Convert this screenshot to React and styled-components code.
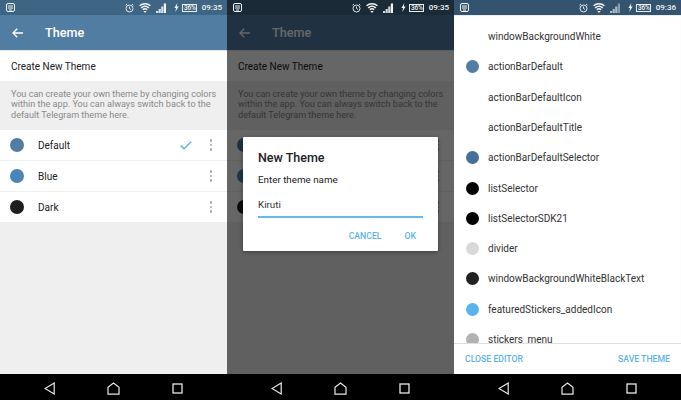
import React from "react";
import styled, { createGlobalStyle } from "styled-components";

const Global = createGlobalStyle`
  html, body { margin: 0; padding: 0; background: #000; }
  body { font-family: Roboto, "Liberation Sans", sans-serif; }
  #root { width: 681px; height: 400px; overflow: hidden; }
`;

const Page = styled.div`
  display: grid;
  grid-template-columns: 227px 227px 227px;
  width: 681px;
  height: 400px;
`;
const Screen = styled.div`
  display: flex;
  flex-direction: column;
  height: 400px;
  background: #efefef;
  overflow: hidden;
`;
const Status = styled.div`
  flex: 0 0 15px;
  height: 15px;
  display: flex;
  align-items: center;
  padding: 0 5px 0 6px;
  background: ${p => p.$bg};
  color: #f2f5f7;
`;
const Time = styled.span`
  font-size: 8px;
  font-weight: 500;
  margin-left: 4.5px;
  line-height: 15px;
  white-space: nowrap;
`;
const BatteryBox = styled.span`
  width: 15px;
  height: 8px;
  border: 1px solid #e8edf1;
  box-sizing: border-box;
  font-size: 6.5px;
  font-weight: 500;
  line-height: 6.5px;
  text-align: center;
  margin-left: 3px;
  letter-spacing: -0.2px;
  white-space: nowrap;
`;
const StatusIcon = styled.svg`
  display: block;
  flex: none;
  margin-left: ${p => p.$ml || 0};
`;
const Body = styled.div`
  position: relative;
  flex: 1;
  min-height: 0;
  display: flex;
  flex-direction: column;
`;
const ActionBar = styled.div`
  flex: 0 0 35px;
  display: flex;
  align-items: center;
  background: #527da3;
  padding-left: 12px;
  color: #fff;
`;
const Title = styled.div`
  font-size: 12.6px;
  font-weight: 500;
  margin-left: 22px;
`;
const CreateRow = styled.div`
  flex: 0 0 31px;
  background: #fff;
  display: flex;
  align-items: center;
  padding-left: 11px;
  font-size: 10px;
  color: #222;
  border-top: 1px solid #e2e6ea;
  box-sizing: border-box;
`;
const Hint = styled.div`
  flex: 0 0 49px;
  box-sizing: border-box;
  padding: 8px 8px 0 11px;
  font-size: 9.1px;
  line-height: 10.4px;
  color: #8a8a8a;
  white-space: nowrap;
`;
const ThemeList = styled.div`
  background: #fff;
  display: flex;
  flex-direction: column;
`;
const ThemeRow = styled.div`
  height: 30px;
  display: flex;
  align-items: center;
  padding-left: 10px;
  & + & { border-top: 1px solid #f0f0f0; }
`;
const Swatch = styled.span`
  flex: none;
  width: 14px;
  height: 14px;
  border-radius: 50%;
  background: ${p => p.$c};
`;
const ThemeName = styled.span`
  margin-left: 14px;
  font-size: 10px;
  color: #222;
  flex: 1;
`;
const Check = styled.svg`
  display: block;
  margin-right: 18px;
`;
const Kebab = styled.span`
  display: flex;
  flex-direction: column;
  gap: 2px;
  margin-right: 15px;
  & > i { display: block; width: 2.4px; height: 2.4px; border-radius: 50%; background: #a8a8a8; }
`;
const Nav = styled.div`
  flex: 0 0 26px;
  box-sizing: border-box;
  background: #000;
  display: grid;
  grid-template-columns: 1fr 1fr 1fr;
  padding: 3px 18px 0;
  align-items: center;
  justify-items: center;
`;
const Scrim = styled.div`
  position: absolute;
  inset: 0;
  background: rgba(0, 0, 0, 0.6);
`;
const Dialog = styled.div`
  position: absolute;
  left: 16px;
  top: 122px;
  width: 195px;
  height: 114px;
  box-sizing: border-box;
  padding: 13px 15px 0;
  background: #fff;
  box-shadow: 0 1px 4px rgba(0,0,0,.35);
  border-radius: 1px;
  display: flex;
  flex-direction: column;
`;
const DialogTitle = styled.div`
  font-size: 12.5px;
  font-weight: 500;
  line-height: 15px;
  color: #222;
`;
const DialogText = styled.div`
  font-size: 9.8px;
  line-height: 13px;
  margin-top: 8px;
  color: #222;
`;
const Field = styled.div`
  margin-top: 12px;
  height: 18px;
  font-size: 9.8px;
  line-height: 13px;
  color: #333;
  border-bottom: 2px solid #66b8ee;
`;
const DialogActions = styled.div`
  display: flex;
  justify-content: flex-end;
  gap: 23px;
  margin-top: 12px;
  padding-right: 7px;
`;
const TextAction = styled.span`
  font-size: 8.7px;
  line-height: 12px;
  font-weight: 500;
  color: #5cb3ec;
`;
const Editor = styled.div`
  flex: 1;
  min-height: 0;
  background: #fff;
  display: flex;
  flex-direction: column;
`;
const KeyList = styled.div`
  flex: 1;
  min-height: 0;
  overflow: hidden;
  padding-top: 6.4px;
  display: flex;
  flex-direction: column;
  box-shadow: inset 0 1px 1px rgba(0,0,0,.08);
`;
const KeyRow = styled.div`
  flex: 0 0 30.3px;
  display: flex;
  align-items: center;
  padding-left: 12px;
`;
const KeySwatch = styled.span`
  flex: none;
  width: 13px;
  height: 13px;
  border-radius: 50%;
  background: ${p => p.$c || "transparent"};
`;
const KeyName = styled.span`
  margin-left: 9px;
  font-size: 10px;
  color: #333;
  white-space: nowrap;
`;
const Footer = styled.div`
  flex: 0 0 31px;
  box-sizing: border-box;
  border-top: 1px solid #dedede;
  background: #fff;
  display: flex;
  align-items: center;
  justify-content: space-between;
  padding: 0 11px;
`;

const Notif = () => (
  <StatusIcon width="9" height="10" viewBox="0 0 9 10" fill="none" stroke="currentColor" strokeWidth="1">
    <rect x="0.5" y="0.5" width="8" height="8" rx="1.5" />
    <path d="M2 3h5M2 5h5M3 7h3" />
  </StatusIcon>
);
const Alarm = () => (
  <StatusIcon $ml="auto" width="9" height="10" viewBox="0 0 9 10" fill="none" stroke="currentColor" strokeWidth="0.9">
    <circle cx="4.5" cy="5.5" r="3.5" />
    <path d="M4.5 3.5v2l1.5 1M0.6 2.2 2 1M8.4 2.2 7 1" />
  </StatusIcon>
);
const Wifi = () => (
  <StatusIcon $ml="5px" width="12" height="10" viewBox="0 0 12 10" fill="none" stroke="currentColor" strokeWidth="1.5">
    <path d="M.6 2.8C3.6.2 8.4.2 11.4 2.8M2.2 4.8c2.2-1.8 5.4-1.8 7.6 0M3.8 6.6c1.3-.9 3.1-.9 4.4 0" />
    <path d="M4.4 8.1h3.2L6 10z" fill="currentColor" stroke="none" />
  </StatusIcon>
);
const Signal = ({ dim }) => (
  <StatusIcon $ml="5px" width="10" height="10" viewBox="0 0 10 10" fill="currentColor">
    <path d="M0 8h2.2v2H0zM2.6 6h2.2v4H2.6zM5.2 3.5h2.2V10H5.2z" opacity={dim ? 0.65 : 0.85} />
    <path d="M7.8 0.5H10V10H7.8z" opacity={dim ? 0.45 : 1} />
  </StatusIcon>
);
const Bolt = () => (
  <StatusIcon $ml="8px" width="5" height="9" viewBox="0 0 5 9" fill="currentColor">
    <path d="M3.4 0 0.4 5h1.7L1.3 9 4.6 3.6H2.8z" />
  </StatusIcon>
);

const StatusBar = ({ bg, time, dim }) => (
  <Status $bg={bg}>
    <Notif />
    <Alarm />
    <Wifi />
    <Signal dim={dim} />
    <Bolt />
    <BatteryBox>36%</BatteryBox>
    <Time>{time}</Time>
  </Status>
);

const Back = () => (
  <svg width="11" height="10" viewBox="0 0 11 10" fill="none" stroke="currentColor" strokeWidth="1.3" style={{ display: "block" }}>
    <path d="M11 5H1M5.2.7 1 5l4.2 4.3" />
  </svg>
);

const NavBar = () => (
  <Nav>
    <svg width="11" height="13" viewBox="0 0 11 13" fill="none" stroke="#e8e8e8" strokeWidth="1.2"><path d="M10.2 1V12L1 6.5z" /></svg>
    <svg width="13" height="13" viewBox="0 0 13 13" fill="none" stroke="#e8e8e8" strokeWidth="1.2"><path d="M1 12.2V5.4L6.5 1 12 5.4v6.8z" /></svg>
    <svg width="11" height="11" viewBox="0 0 11 11" fill="none" stroke="#e8e8e8" strokeWidth="1.3"><rect x="1" y="1" width="9" height="9" /></svg>
  </Nav>
);

const themes = [
  { name: "Default", color: "#527da3", active: true },
  { name: "Blue", color: "#4a84b8" },
  { name: "Dark", color: "#1d1f22" },
];

const ThemePage = () => (
  <>
    <ActionBar>
      <Back />
      <Title>Theme</Title>
    </ActionBar>
    <CreateRow>Create New Theme</CreateRow>
    <Hint>
      You can create your own theme by changing colors<br />
      within the app. You can always switch back to the<br />
      default Telegram theme here.
    </Hint>
    <ThemeList>
      {themes.map(t => (
        <ThemeRow key={t.name}>
          <Swatch $c={t.color} />
          <ThemeName>{t.name}</ThemeName>
          {t.active && (
            <Check width="12" height="9" viewBox="0 0 12 9" fill="none" stroke="#5cb3ec" strokeWidth="1.5">
              <path d="M.8 4.6 4 7.8 11.2.8" />
            </Check>
          )}
          <Kebab><i /><i /><i /></Kebab>
        </ThemeRow>
      ))}
    </ThemeList>
  </>
);

const keys = [
  ["windowBackgroundWhite"],
  ["actionBarDefault", "#527da3"],
  ["actionBarDefaultIcon"],
  ["actionBarDefaultTitle"],
  ["actionBarDefaultSelector", "#44709b"],
  ["listSelector", "#000"],
  ["listSelectorSDK21", "#000"],
  ["divider", "#d9d9d9"],
  ["windowBackgroundWhiteBlackText", "#212121"],
  ["featuredStickers_addedIcon", "#5cb3ec"],
  ["stickers_menu", "#b0b2b4"],
];

export default function App() {
  return (
    <Page>
      <Global />
      <Screen>
        <StatusBar bg="#3e6584" time="09:35" />
        <Body><ThemePage /></Body>
        <NavBar />
      </Screen>
      <Screen>
        <StatusBar bg="#1a2a36" time="09:35" />
        <Body>
          <ThemePage />
          <Scrim />
          <Dialog>
            <DialogTitle>New Theme</DialogTitle>
            <DialogText>Enter theme name</DialogText>
            <Field>Kiruti</Field>
            <DialogActions>
              <TextAction>CANCEL</TextAction>
              <TextAction>OK</TextAction>
            </DialogActions>
          </Dialog>
        </Body>
        <NavBar />
      </Screen>
      <Screen>
        <StatusBar bg="#33536f" time="09:36" dim />
        <Editor>
          <KeyList>
            {keys.map(([name, c]) => (
              <KeyRow key={name}>
                <KeySwatch $c={c} />
                <KeyName>{name}</KeyName>
              </KeyRow>
            ))}
          </KeyList>
          <Footer>
            <TextAction>CLOSE EDITOR</TextAction>
            <TextAction>SAVE THEME</TextAction>
          </Footer>
        </Editor>
        <NavBar />
      </Screen>
    </Page>
  );
}
